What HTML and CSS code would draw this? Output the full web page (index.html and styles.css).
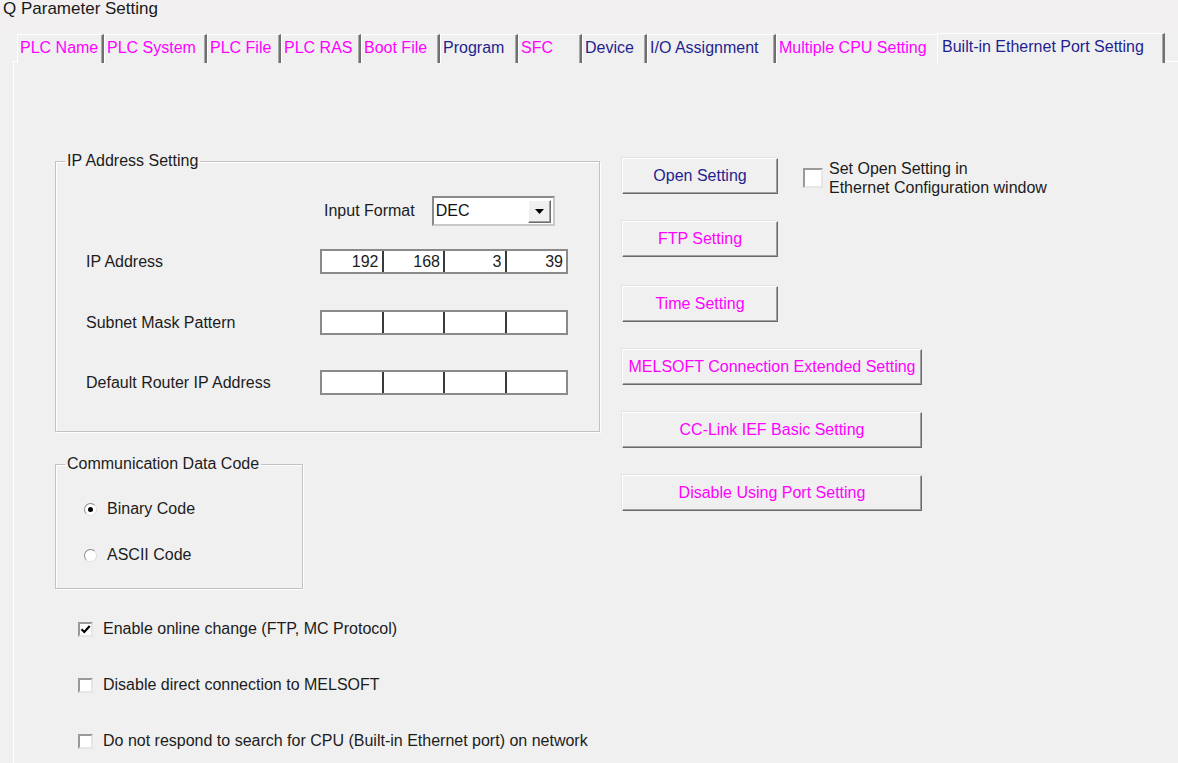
FILE: index.html
```html
<!DOCTYPE html>
<html lang="en">

<head>
    <meta charset="UTF-8">
    <title>Q Parameter Setting</title>
    <link rel="stylesheet" href="styles.css">
</head>

<body>

    <div class="titulo">Q Parameter Setting</div>

    <div class="pestanas">
        <div class="pestana rosa">PLC Name</div>
        <div class="pestana rosa">PLC System</div>
        <div class="pestana rosa">PLC File</div>
        <div class="pestana rosa">PLC RAS</div>
        <div class="pestana rosa">Boot File</div>
        <div class="pestana azul">Program</div>
        <div class="pestana rosa">SFC</div>
        <div class="pestana azul">Device</div>
        <div class="pestana azul">I/O Assignment</div>
        <div class="pestana rosa antes-activa">Multiple CPU Setting</div>
        <div class="pestana azul activa">Built-in Ethernet Port Setting</div>
    </div>

    <div class="panel">
        <div class="columna-izq">

            <fieldset class="grupo grupo-ip">
                <legend>IP Address Setting</legend>
                <div class="contenido-ip">
                    <div class="fila fila-formato">
                        <span>Input Format</span>
                        <div class="combo">
                            <span class="combo-valor">DEC</span>
                            <span class="combo-flecha">
                                <svg width="9" height="5" viewBox="0 0 9 5"><path d="M0 0h9L4.5 5z" fill="#000"/></svg>
                            </span>
                        </div>
                    </div>
                    <div class="fila fila-ip">
                        <span class="etiqueta">IP Address</span>
                        <div class="octetos">
                            <span>192</span><span>168</span><span>3</span><span>39</span>
                        </div>
                    </div>
                    <div class="fila fila-mascara">
                        <span class="etiqueta">Subnet Mask Pattern</span>
                        <div class="octetos">
                            <span></span><span></span><span></span><span></span>
                        </div>
                    </div>
                    <div class="fila fila-router">
                        <span class="etiqueta">Default Router IP Address</span>
                        <div class="octetos">
                            <span></span><span></span><span></span><span></span>
                        </div>
                    </div>
                </div>
            </fieldset>

            <fieldset class="grupo grupo-codigo">
                <legend>Communication Data Code</legend>
                <div class="contenido-codigo">
                    <label class="opcion"><span class="radio marcado"></span>Binary Code</label>
                    <label class="opcion"><span class="radio"></span>ASCII Code</label>
                </div>
            </fieldset>

            <div class="casillas">
                <label class="casilla">
                    <span class="caja">
                        <svg width="11" height="11" viewBox="0 0 11 11"><path d="M1.5 5.2l2.8 2.8 5.4-6" fill="none" stroke="#000" stroke-width="2.2"/></svg>
                    </span>
                    Enable online change (FTP, MC Protocol)
                </label>
                <label class="casilla"><span class="caja"></span>Disable direct connection to MELSOFT</label>
                <label class="casilla"><span class="caja"></span>Do not respond to search for CPU (Built-in Ethernet port) on network</label>
            </div>
        </div>

        <div class="columna-der">
            <div class="fila-abierta">
                <button class="boton azul">Open Setting</button>
                <label class="casilla casilla-doble">
                    <span class="caja"></span>
                    <span>Set Open Setting in<br>Ethernet Configuration window</span>
                </label>
            </div>
            <button class="boton rosa">FTP Setting</button>
            <button class="boton rosa boton-hora">Time Setting</button>
            <button class="boton ancho rosa">MELSOFT Connection Extended Setting</button>
            <button class="boton ancho rosa">CC-Link IEF Basic Setting</button>
            <button class="boton ancho rosa">Disable Using Port Setting</button>
        </div>
    </div>

</body>

</html>
```

FILE: styles.css
```css
body {
    margin: 0;
    background-color: #f0f0f0;
    font-family: "Liberation Sans", Arial, sans-serif;
    font-size: 16px;
    color: #1c1c1c;
    height: 763px;
    overflow: hidden;
}

.titulo {
    height: 34px;
    padding-left: 3px;
    font-size: 17px;
    line-height: 18px;
    color: #1a1a1a;
    background-color: #f2f0f0;
}

.rosa {
    color: #ff00ff;
}

.azul {
    color: #1f1f8f;
}

/* pestañas */
.pestanas {
    display: grid;
    grid-template-columns: 87px 103px 74px 80px 79px 78px 64px 65px 129px 161px 228px;
    margin-left: 17px;
    height: 27px;
    position: relative;
    z-index: 1;
}

.pestana {
    border-top: 1px solid #fff;
    border-left: 1px solid #fff;
    border-right: 2px solid #707070;
    box-shadow: inset -1px 0 #a8a8a8;
    padding-left: 2px;
    line-height: 25px;
    white-space: nowrap;
    background-color: #f0f0f0;
}

.pestana.antes-activa {
    border-right: none;
    box-shadow: none;
}

.pestana.activa {
    margin-top: -1px;
    height: 29px;
    padding-left: 4px;
}

.panel {
    box-sizing: border-box;
    margin-left: 13px;
    border-top: 1px solid #fff;
    border-left: 1px solid #fff;
    height: 702px;
    padding: 90px 0 0 41px;
    display: flex;
    gap: 22px;
}

/* grupos */
.grupo {
    margin: 0;
    padding: 0;
    border: 1px solid #c2c2c2;
    box-shadow: inset 1px 1px #fff, 1px 1px #fff;
}

.grupo legend {
    margin-left: 9px;
    padding: 0 2px;
    line-height: 18px;
}

.grupo-ip {
    width: 545px;
    box-sizing: border-box;
}

.contenido-ip {
    padding: 26px 0 36px 30px;
}

.fila {
    display: flex;
    align-items: center;
}

.fila-formato {
    height: 30px;
    padding-left: 238px;
    gap: 17px;
}

.fila-ip {
    margin-top: 23px;
}

.fila-mascara {
    margin-top: 36px;
}

.fila-router {
    margin-top: 35px;
}

.etiqueta {
    width: 234px;
}

.combo {
    width: 123px;
    height: 30px;
    box-sizing: border-box;
    border: 2px solid #8a8a8a;
    border-right-color: #c8c8c8;
    border-bottom-color: #c8c8c8;
    background-color: #fff;
    display: flex;
    align-items: center;
    justify-content: space-between;
    padding: 0 2px;
}

.combo-valor {
    color: #111;
}

.combo-flecha {
    width: 23px;
    height: 23px;
    box-sizing: border-box;
    background-color: #f0f0f0;
    border: 1px solid;
    border-color: #fff #6d6d6d #6d6d6d #fff;
    box-shadow: inset -1px -1px #a0a0a0;
    display: flex;
    align-items: center;
    justify-content: center;
}

.octetos {
    display: flex;
    width: 248px;
    height: 25px;
    box-sizing: border-box;
    border: 2px solid #8a8a8a;
    background-color: #fff;
}

.octetos span {
    flex: 1;
    text-align: right;
    padding-right: 3px;
    line-height: 21px;
    border-left: 2px solid #3a3a3a;
}

.octetos span:first-child {
    border-left: none;
}

.grupo-codigo {
    width: 248px;
    box-sizing: border-box;
    margin-top: 23px;
}

.contenido-codigo {
    padding: 26px 0 23px 28px;
    display: flex;
    flex-direction: column;
    gap: 26px;
}

.opcion {
    display: flex;
    align-items: center;
    gap: 10px;
    height: 20px;
}

.radio {
    width: 13px;
    height: 13px;
    box-sizing: border-box;
    border-radius: 50%;
    background-color: #fff;
    border: 1px solid;
    border-color: #8a8a8a #e0e0e0 #e0e0e0 #8a8a8a;
    position: relative;
}

.radio.marcado::after {
    content: "";
    position: absolute;
    left: 3px;
    top: 3px;
    width: 5px;
    height: 5px;
    border-radius: 50%;
    background-color: #000;
}

/* casillas */
.casillas {
    display: flex;
    flex-direction: column;
    gap: 36px;
    margin-top: 30px;
    padding-left: 23px;
}

.casilla {
    display: flex;
    align-items: center;
    gap: 10px;
    height: 20px;
    white-space: nowrap;
}

.caja {
    width: 15px;
    height: 15px;
    box-sizing: border-box;
    background-color: #fff;
    border: 2px solid;
    border-color: #9a9a9a #e6e6e6 #e6e6e6 #9a9a9a;
    display: flex;
    align-items: center;
    justify-content: center;
    flex-shrink: 0;
}

/* botones */
.columna-der {
    display: flex;
    flex-direction: column;
    align-items: flex-start;
    gap: 27px;
    padding-top: 6px;
}

.fila-abierta {
    display: flex;
    align-items: flex-start;
    gap: 25px;
    height: 36px;
}

.casilla-doble {
    height: auto;
    align-items: flex-start;
    gap: 6px;
    margin-top: 1px;
    line-height: 19px;
}

.casilla-doble .caja {
    width: 20px;
    height: 20px;
    margin-top: 9px;
}

.boton {
    width: 156px;
    height: 36px;
    font-family: "Liberation Sans", Arial, sans-serif;
    font-size: 16px;
    background-color: #f0f0f0;
    border: 1px solid;
    border-color: #fff #6a6a6a #6a6a6a #fff;
    box-shadow: inset -1px -1px #a0a0a0, -1px -1px #e3e3e3;
    padding: 0;
    cursor: pointer;
}

.boton-hora {
    margin-top: 2px;
}

.boton.ancho {
    width: 300px;
}
```
